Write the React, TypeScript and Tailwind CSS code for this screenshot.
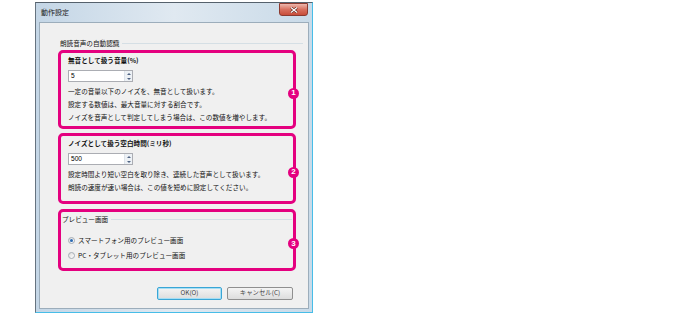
const FONT = "font-['Noto_Sans_CJK_JP','Noto_Sans',sans-serif]";

function Badge({ n }: { n: number }) {
  return (
    <span className="absolute right-[-6px] top-[calc(50%-2px)] flex h-[11px] w-[11px] items-center justify-center rounded-full bg-[#e4007f] font-['Liberation_Sans',sans-serif] text-[8px] font-bold leading-none text-white">
      {n}
    </span>
  );
}

function Arrow({ up }: { up?: boolean }) {
  return (
    <span className="flex flex-1 items-center justify-center">
      <svg width="4" height="2" viewBox="0 0 4 2">
        <path d={up ? "M0 2L2 0L4 2Z" : "M0 0L2 2L4 0Z"} fill="#4f6383" />
      </svg>
    </span>
  );
}

function Spin({ value }: { value: string }) {
  return (
    <div className="mt-[4px] flex h-[12px] w-[65px] border border-[#abadb3] bg-white">
      <span className="flex-1 pl-[2px] font-['Liberation_Sans',sans-serif] text-[6.6px] leading-[10px] text-black">{value}</span>
      <div className="flex w-[8px] flex-col border-l border-[#dde3ea] bg-[#edf1f5]">
        <Arrow up />
        <Arrow />
      </div>
    </div>
  );
}

function Radio({ checked, label }: { checked?: boolean; label: string }) {
  return (
    <div className="flex h-[15px] items-center gap-[3px]">
      <span className="flex h-[7px] w-[7px] items-center justify-center rounded-full border border-[#a4acb5] bg-gradient-to-br from-[#dcdcdc] to-white">
        {checked && <span className="h-[3px] w-[3px] rounded-full bg-[#2a6ab3]" />}
      </span>
      <span>{label}</span>
    </div>
  );
}

function Frame({ n, h, children, className }: { n: number; h: string; children: React.ReactNode; className?: string }) {
  return (
    <div className={`relative w-[238px] rounded-[5px] border-[3px] border-[#e4007f] ${h} ${className ?? ""}`}>
      {children}
      <Badge n={n} />
    </div>
  );
}

function Button({ label, focused }: { label: string; focused?: boolean }) {
  return (
    <button
      className={`flex h-[13px] items-center justify-center rounded-[2px] border bg-gradient-to-b from-[#f4f4f4] to-[#dddddd] text-[6.4px] leading-none text-[#444] ${
        focused ? "w-[65px] border-[#3aa6d6] shadow-[inset_0_0_0_1px_#a6def4]" : "w-[66px] border-[#8f8f8f]"
      }`}
    >
      {label}
    </button>
  );
}

export default function App() {
  return (
    <div className={`min-h-[319px] w-full bg-white pl-[35px] pt-[2px] ${FONT}`}>
      <div className="flex h-[311px] w-[278px] flex-col border border-l-[#66737f] border-t-[#55616c] border-r-[#47bde8] border-b-[#47bde8] bg-gradient-to-r from-[#c4d6e6] via-[#e0e9f1] to-[#c9dae8]">
        <div className="flex h-[19px] items-start justify-between pl-[5px] pr-[4px]">
          <span className="pt-[5px] text-[7px] leading-[9px] text-[#1a1a1a]">動作設定</span>
          <span className="flex h-[13px] w-[29px] items-center justify-center rounded-b-[3px] border border-[#8c3a30] bg-gradient-to-b from-[#ecb7ad] via-[#d8705f] to-[#c84d3a]">
            <svg width="8" height="6" viewBox="0 0 8 6">
              <path d="M1 0.5L7 5.5M7 0.5L1 5.5" stroke="#5a2119" strokeWidth="2.4" />
              <path d="M1 0.5L7 5.5M7 0.5L1 5.5" stroke="#fff" strokeWidth="1.3" />
            </svg>
          </span>
        </div>
        <div className="mx-[3px] mb-[3px] flex flex-1 flex-col border border-[#9cadbb] bg-[#f0f0f0] pl-[18px] text-[6.6px] text-[#111]">
          <div className="mt-[14px] flex h-[12px] items-center pl-[2px] pr-[5px] leading-[12px]">
            <span>朗読音声の自動認識</span>
            <span className="ml-[3px] h-px flex-1 bg-[#d5dfe5]" />
          </div>

          <Frame n={1} h="h-[79px]" className="mt-[1px] pl-[7px] pt-[1px]">
            <div className="font-bold leading-[12px]">無音として扱う音量(%)</div>
            <Spin value="5" />
            <div className="mt-[3px] leading-[13px]">
              <div>一定の音量以下のノイズを、無音として扱います。</div>
              <div>設定する数値は、最大音量に対する割合です。</div>
              <div>ノイズを音声として判定してしまう場合は、この数値を増やします。</div>
            </div>
          </Frame>

          <Frame n={2} h="h-[71px]" className="mt-[4px] pl-[7px] pt-[1px]">
            <div className="font-bold leading-[12px]">ノイズとして扱う空白時間(ミリ秒)</div>
            <Spin value="500" />
            <div className="mt-[3px] leading-[13px]">
              <div>設定時間より短い空白を取り除き、連続した音声として扱います。</div>
              <div>朗読の速度が速い場合は、この値を短めに設定してください。</div>
            </div>
          </Frame>

          <Frame n={3} h="h-[62px]" className="mt-[5px] pl-[1px] pt-[1px]">
            <div className="flex h-[12px] items-center pr-[1px] leading-[12px]">
              <span>プレビュー画面</span>
              <span className="ml-[3px] h-px flex-1 bg-[#d5dfe5]" />
            </div>
            <div className="ml-[6px] mt-[8px]">
              <Radio checked label="スマートフォン用のプレビュー画面" />
              <Radio label="PC・タブレット用のプレビュー画面" />
            </div>
          </Frame>

          <div className="mt-[16px] flex justify-end gap-[5px] pr-[15px]">
            <Button label="OK(O)" focused />
            <Button label="キャンセル(C)" />
          </div>
        </div>
      </div>
    </div>
  );
}
